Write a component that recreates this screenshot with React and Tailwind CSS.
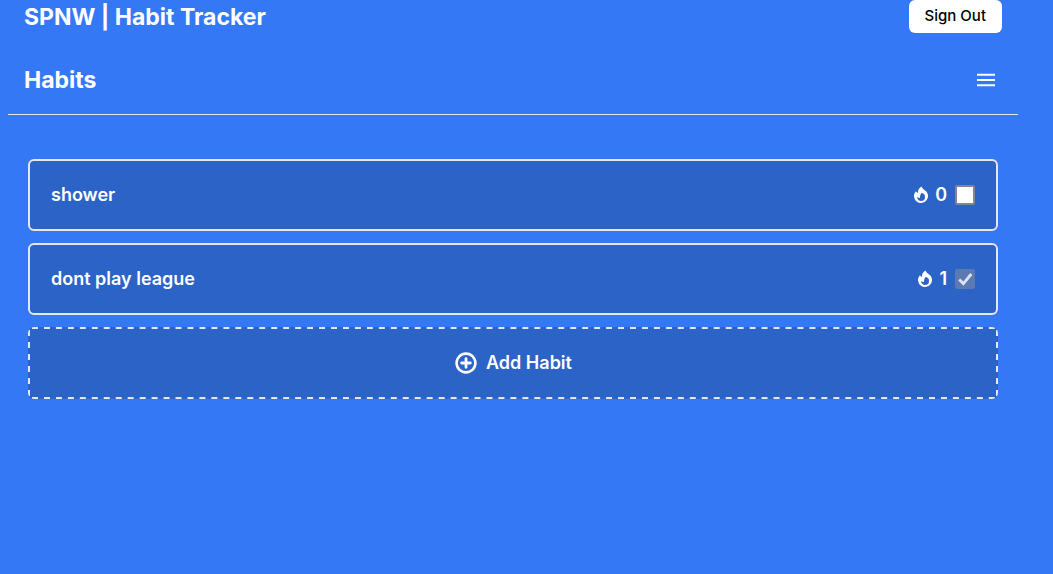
import { HiMiniFire } from "react-icons/hi2";

const habits = [
  { name: "shower", streak: 0, done: false },
  { name: "dont play league", streak: 1, done: true },
];

function Header() {
  return (
    <header className="flex items-start justify-between px-4">
      <h1 className="text-[23px] leading-[34px] font-bold">SPNW | Habit Tracker</h1>
      <button type="button" className="h-[33px] rounded-md bg-white px-4 text-[15px] font-medium text-black">
        Sign Out
      </button>
    </header>
  );
}

function MenuIcon() {
  return (
    <svg viewBox="0 0 24 24" className="h-6 w-6" fill="none" stroke="currentColor" strokeWidth="2" aria-hidden="true">
      <path d="M3 6.7h18M3 12h18M3 17.3h18" />
    </svg>
  );
}

function PlusIcon() {
  return (
    <svg viewBox="0 0 24 24" className="h-6 w-6" fill="none" stroke="currentColor" aria-hidden="true">
      <circle cx="12" cy="12" r="9.4" strokeWidth="2.6" />
      <path d="M12 7.7v8.6M7.7 12h8.6" strokeWidth="2.8" strokeLinecap="round" />
    </svg>
  );
}

// Evenly spaced 6px dashes, wider than the browser's own dashed border.
function DashedOutline() {
  return (
    <svg
      className="pointer-events-none absolute inset-0 h-full w-full rounded-md text-gray-200"
      stroke="currentColor"
      strokeWidth="2"
      aria-hidden="true"
    >
      <rect x="0" y="0" width="100%" height="100%" fill="none" stroke="none" />
      <svg x="4" width="100%" height="100%" overflow="visible">
        <line x1="0" y1="1" x2="99.3%" y2="1" strokeDasharray="6 5.96" />
      </svg>
      <svg x="4" y="-1" width="100%" height="100%" overflow="visible">
        <line x1="0" y1="100%" x2="99.3%" y2="100%" strokeDasharray="6 5.96" />
      </svg>
      <svg y="3" width="100%" height="100%" overflow="visible">
        <line x1="1" y1="0" x2="1" y2="100%" strokeDasharray="6 6" />
      </svg>
      <svg x="-1" y="3" width="100%" height="100%" overflow="visible">
        <line x1="100%" y1="0" x2="100%" y2="100%" strokeDasharray="6 6" />
      </svg>
    </svg>
  );
}

function Habit({ habit, id }) {
  return (
    <li className="flex h-18 items-center justify-between rounded-md border-2 border-gray-200 bg-[#2c63c7] px-[21px]">
      <label htmlFor={id}>{habit.name}</label>
      <div className="flex items-center gap-2">
        <span className="flex items-center gap-1">
          <HiMiniFire className="h-5 w-5" aria-hidden="true" />
          {habit.streak}
        </span>
        <span className="grid h-5 w-5">
          <input
            id={id}
            type="checkbox"
            defaultChecked={habit.done}
            className="peer col-start-1 row-start-1 h-5 w-5 appearance-none rounded-[2px] border-2 border-[#858494] bg-white checked:border-0 checked:bg-[#5b7ab2]"
          />
          <svg
            viewBox="0 0 20 20"
            className="pointer-events-none invisible col-start-1 row-start-1 h-5 w-5 text-[#dce4f2] peer-checked:visible"
            fill="none"
            stroke="currentColor"
            strokeWidth="2.8"
            aria-hidden="true"
          >
            <path d="M4.2 10.4l4.2 4.2L16.3 5" />
          </svg>
        </span>
      </div>
    </li>
  );
}

export default function App() {
  return (
    <div className="min-h-screen bg-[#3478f6] pr-[35px] pl-2 font-['Inter',sans-serif] text-white">
      <Header />
      <main>
        <div className="mt-3 flex h-[69px] items-center justify-between border-b border-gray-200 pr-5 pl-4">
          <h2 className="text-[23px] leading-[34px] font-bold">Habits</h2>
          <button type="button" aria-label="Menu">
            <MenuIcon />
          </button>
        </div>
        <div className="mt-11 flex flex-col gap-3 px-5 text-lg font-semibold">
          <ul className="flex flex-col gap-3">
            {habits.map((habit, i) => (
              <Habit key={habit.name} habit={habit} id={`habit-${i}`} />
            ))}
          </ul>
          <button
            type="button"
            className="relative flex h-18 items-center justify-center gap-2 rounded-md bg-[#2c63c7]"
          >
            <DashedOutline />
            <PlusIcon />
            Add Habit
          </button>
        </div>
      </main>
    </div>
  );
}
